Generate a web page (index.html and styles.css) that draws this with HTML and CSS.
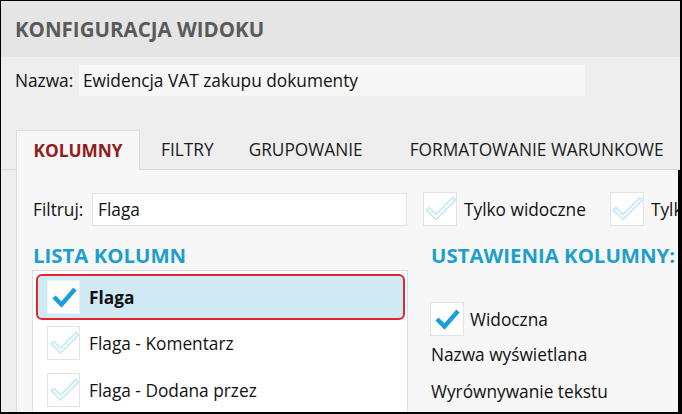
FILE: index.html
```html
<!DOCTYPE html>
<html lang="pl">
<head>
<meta charset="utf-8">
<title>Konfiguracja widoku</title>
<link rel="stylesheet" href="styles.css">
</head>
<body>
<div class="window">
  <header class="header">
    <h1 class="title">KONFIGURACJA WIDOKU</h1>
  </header>
  <div class="name-row">
    <span class="label name-label">Nazwa:</span>
    <div class="name-input">Ewidencja VAT zakupu dokumenty</div>
  </div>
  <nav class="tabs">
    <div class="tab active">KOLUMNY</div>
    <div class="tab t-filtry">FILTRY</div>
    <div class="tab t-grup">GRUPOWANIE</div>
    <div class="tab t-format">FORMATOWANIE WARUNKOWE</div>
  </nav>
  <section class="panel">
    <div class="filter-row">
      <span class="label filter-label">Filtruj:</span>
      <div class="filter-input">Flaga</div>
      <div class="check-item first">
        <span class="box light"><svg viewBox="0 0 34 34" width="34" height="34"><polyline points="6,18 13,25 30,8" class="outline"/><polyline points="6,18 13,25 30,8" class="inner"/></svg></span>
        <span class="check-label">Tylko widoczne</span>
      </div>
      <div class="check-item second">
        <span class="box light"><svg viewBox="0 0 34 34" width="34" height="34"><polyline points="6,18 13,25 30,8" class="outline"/><polyline points="6,18 13,25 30,8" class="inner"/></svg></span>
        <span class="check-label">Tylko zaznaczone</span>
      </div>
    </div>
    <div class="columns">
      <div class="left">
        <h2 class="heading">LISTA KOLUMN</h2>
        <div class="list">
          <div class="row selected">
            <span class="box small"><svg viewBox="0 0 32 32" width="32" height="32"><polyline points="6,16 13.5,23.5 27,8" class="solid"/></svg></span>
            <span class="row-label bold">Flaga</span>
          </div>
          <div class="row">
            <span class="box small light"><svg viewBox="0 0 32 32" width="32" height="32"><polyline points="6,17 12.5,23.5 28,8" class="outline"/><polyline points="6,17 12.5,23.5 28,8" class="inner"/></svg></span>
            <span class="row-label">Flaga - Komentarz</span>
          </div>
          <div class="row">
            <span class="box small light"><svg viewBox="0 0 32 32" width="32" height="32"><polyline points="6,17 12.5,23.5 28,8" class="outline"/><polyline points="6,17 12.5,23.5 28,8" class="inner"/></svg></span>
            <span class="row-label">Flaga - Dodana przez</span>
          </div>
        </div>
      </div>
      <div class="right">
        <h2 class="heading">USTAWIENIA KOLUMNY:</h2>
        <div class="check-item visible">
          <span class="box"><svg viewBox="0 0 34 34" width="34" height="34"><polyline points="7,17 14.5,24.5 28,9" class="solid"/></svg></span>
          <span class="check-label">Widoczna</span>
        </div>
        <div class="setting">Nazwa wyświetlana</div>
        <div class="setting">Wyrównywanie tekstu</div>
      </div>
    </div>
  </section>
</div>
</body>
</html>
```
FILE: styles.css
```css
* { box-sizing: border-box; }
html, body { margin: 0; padding: 0; }
body {
  width: 682px;
  height: 414px;
  overflow: hidden;
  background: #000;
  font-family: "Open Sans", "Noto Sans", sans-serif;
  color: #111;
}
.window {
  width: 682px;
  height: 414px;
  border-top: 1px solid #000;
  border-left: 1px solid #000;
  border-right: 2px solid #000;
  border-bottom: 2px solid #000;
  background: #eeeeee;
  overflow: hidden;
}
.header {
  height: 56px;
  background: #e5e5e5;
  padding-left: 14px;
  display: flex;
  align-items: center;
}
.title {
  margin: 0;
  font-size: 20.5px;
  font-weight: 700;
  color: #5a5a5a;
  white-space: nowrap;
}
.label { font-size: 17.3px; flex: none; white-space: nowrap; }
.name-row {
  display: flex;
  align-items: center;
  margin-top: 8px;
  padding-left: 14px;
  height: 31px;
}
.name-label { width: 64px; }
.name-input {
  flex: none;
  width: 506px;
  height: 31px;
  background: #f7f7f7;
  font-size: 17.3px;
  line-height: 31px;
  padding-left: 4px;
  white-space: nowrap;
}
.tabs {
  margin-top: 34px;
  padding-left: 15px;
  height: 40px;
  display: flex;
  border-bottom: 1px solid #d9d9d9;
  font-size: 17.3px;
  color: #1a1a1a;
  white-space: nowrap;
}
.tab {
  flex: none;
  height: 40px;
  line-height: 39px;
}
.tab.active {
  width: 124px;
  height: 40px;
  background: #f7f7f7;
  border: 1px solid #dcdcdc;
  border-bottom: none;
  color: #941b1b;
  font-weight: 700;
  text-align: center;
  margin-bottom: -1px;
}
.t-filtry { margin-left: 21px; }
.t-grup { margin-left: 35px; }
.t-format { margin-left: 47px; }
.panel {
  margin-left: 15px;
  background: #f7f7f7;
  border-left: 1px solid #dcdcdc;
  height: 300px;
  padding-left: 15px;
  padding-top: 22px;
  border-right: 2px solid #000;
  overflow: hidden;
}
.filter-row {
  display: flex;
  align-items: center;
  height: 34px;
  white-space: nowrap;
}
.filter-label { width: 60px; padding-left: 1px; }
.filter-input {
  flex: none;
  width: 315px;
  height: 33px;
  background: #fff;
  border: 1px solid #e3e3e3;
  font-size: 17.3px;
  line-height: 31px;
  padding-left: 5px;
}
.check-item {
  display: flex;
  align-items: center;
  flex: none;
  white-space: nowrap;
}
.check-item.first { margin-left: 16px; }
.check-item.second { margin-left: 24px; }
.box {
  width: 34px;
  height: 34px;
  background: #fff;
  border: 1px solid #e3e3e3;
  display: flex;
  align-items: center;
  justify-content: center;
  flex: none;
}
.box svg { display: block; flex: none; }
.box.small { width: 33px; height: 34px; }
.outline { fill: none; stroke: #bfe5f6; stroke-width: 5; stroke-linejoin: miter; stroke-linecap: square; }
.inner { fill: none; stroke: #fff; stroke-width: 2; stroke-linejoin: miter; stroke-linecap: square; }
.solid { fill: none; stroke: #1a9fdc; stroke-width: 4.4; stroke-linejoin: miter; stroke-linecap: butt; }
.check-label {
  font-size: 17.3px;
  margin-left: 7px;
}
.columns {
  display: flex;
  margin-top: 17px;
}
.left { width: 376px; flex: none; }
.right { margin-left: 22px; flex: none; }
.heading {
  margin: 0;
  font-size: 20.4px;
  font-weight: 700;
  color: #1c9fca;
  height: 27px;
  line-height: 25px;
  padding-left: 1px;
  white-space: nowrap;
}
.list {
  background: #fff;
  border-left: 1px solid #dedede;
  border-top: 1px solid #dedede;
  border-right: 1px solid #dedede;
  height: 150px;
  padding: 3px 2px 0 3px;
}
.row {
  display: flex;
  align-items: center;
  height: 46px;
  padding-left: 11px;
  margin-bottom: 6px;
}
.row + .row { height: 34px; margin-bottom: 13px; }
.row.selected {
  background: #cfe9f5;
  border: 2px solid #e5232d;
  border-radius: 6px;
  padding-left: 9px;
}
.row.selected .box { border-color: #e9f3f8; }
.row-label {
  font-size: 17.3px;
  margin-left: 9px;
  white-space: nowrap;
}
.row-label.bold { font-weight: 700; }
.check-item.visible { margin-top: 32px; }
.visible .check-label { margin-left: 6px; }
.setting {
  font-size: 17.3px;
  margin-top: 5px;
  height: 28px;
  line-height: 28px;
  padding-left: 1px;
  white-space: nowrap;
}
.setting + .setting { margin-top: 9px; }
```
